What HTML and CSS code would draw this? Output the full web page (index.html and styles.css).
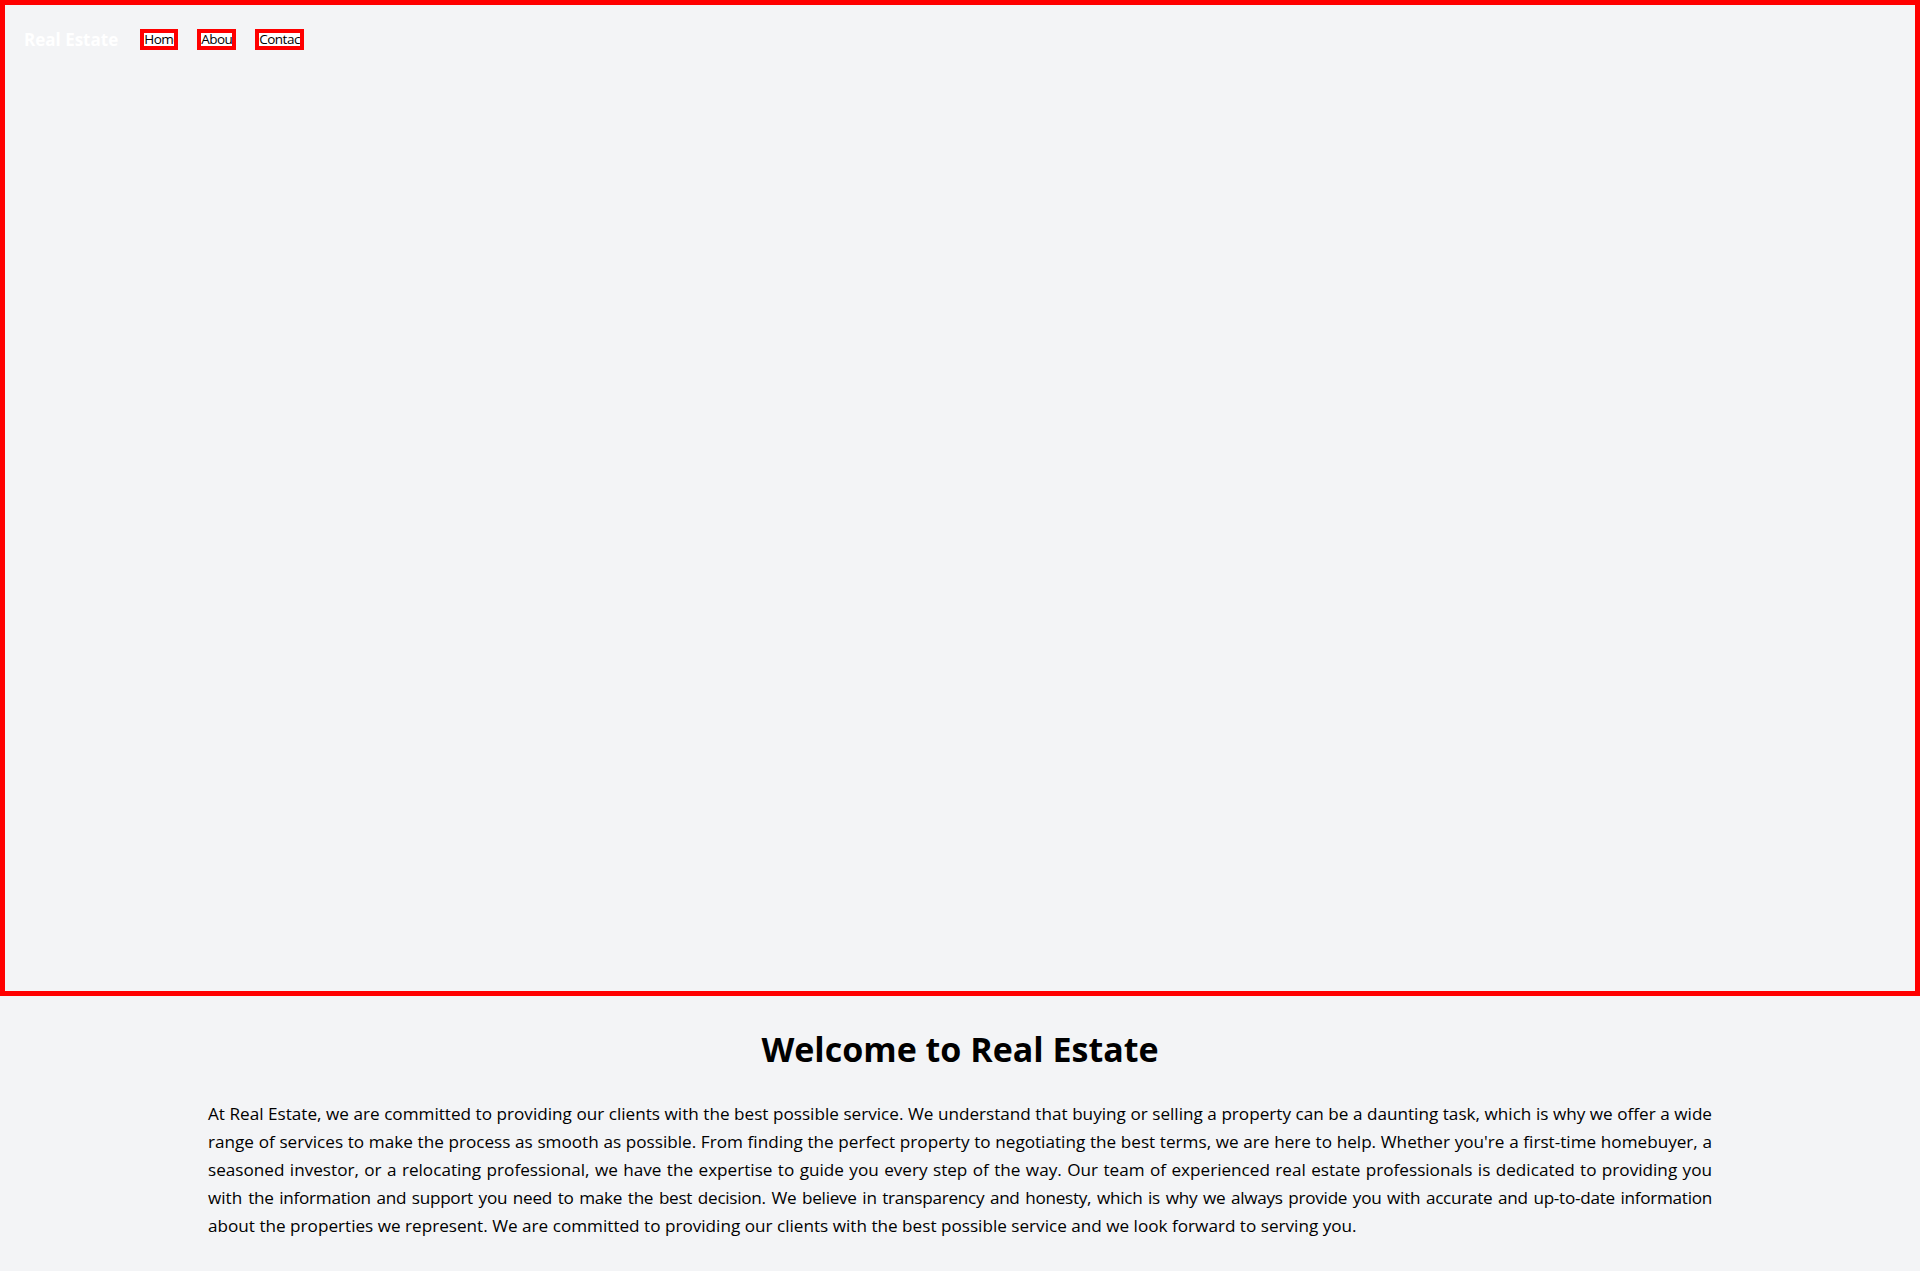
FILE: index.html
```html
<!DOCTYPE html>
<html lang="en">
<head>
<meta charset="utf-8">
<title>Real Estate</title>
<link rel="stylesheet" href="styles.css">
</head>
<body>
<header class="hero">
  <nav class="nav">
    <a class="logo" href="#">Real Estate</a>
    <ul class="menu">
      <li><a class="menu-link menu-link--home" href="#">Home</a></li>
      <li><a class="menu-link menu-link--about" href="#">About</a></li>
      <li><a class="menu-link menu-link--contact" href="#">Contact</a></li>
    </ul>
  </nav>
</header>
<main class="intro">
  <h1 class="intro-title">Welcome to Real Estate</h1>
  <p class="intro-text">At Real Estate, we are committed to providing our clients with the best possible service. We understand that buying or selling a property can be a daunting task, which is why we offer a wide range of services to make the process as smooth as possible. From finding the perfect property to negotiating the best terms, we are here to help. Whether you're a first-time homebuyer, a seasoned investor, or a relocating professional, we have the expertise to guide you every step of the way. Our team of experienced real estate professionals is dedicated to providing you with <span class="intro-text__tight">the information and support you need to make the best decision. We believe in transparency and honesty, which is why we always provide you with accurate and up-to-date information</span> about the properties we represent. We are committed to providing our clients with the best possible service and we look forward to serving you.</p>
</main>
</body>
</html>
```

FILE: styles.css
```css
* {
  box-sizing: border-box;
}

html, body {
  margin: 0;
  padding: 0;
}

body {
  background: #f3f4f6;
  color: #000;
  font-family: "Open Sans", "Noto Sans", sans-serif;
}

.hero {
  height: 996px;
  border: 5px solid #ff0000;
}

.nav {
  display: flex;
  align-items: center;
  padding: 18px 19px 0;
  height: 50px;
}

.logo {
  color: #fff;
  font-weight: 700;
  font-size: 17px;
  text-decoration: none;
  margin-right: 22px;
}

.menu {
  list-style: none;
  margin: 0;
  padding: 0;
  display: flex;
  gap: 19px;
}

.menu li {
  display: block;
}

.menu-link {
  display: block;
  height: 21px;
  border: 4px solid #ff0000;
  background: #fff;
  color: #000;
  font-size: 13.5px;
  line-height: 13px;
  letter-spacing: -0.5px;
  overflow: hidden;
  white-space: nowrap;
  text-decoration: none;
}

.menu-link--home { width: 38px; }
.menu-link--about { width: 39px; }
.menu-link--contact { width: 49px; }

.intro {
  width: 80%;
  margin: 0 auto;
  padding: 16px;
}

.intro-title {
  text-align: center;
  font-size: 34px;
  font-weight: 700;
  margin: 14px 0 28px;
}

.intro-text {
  font-size: 17.15px;
  line-height: 28px;
  text-align: justify;
  margin: 0;
}

.intro-text__tight {
  letter-spacing: -0.28px;
}
```
